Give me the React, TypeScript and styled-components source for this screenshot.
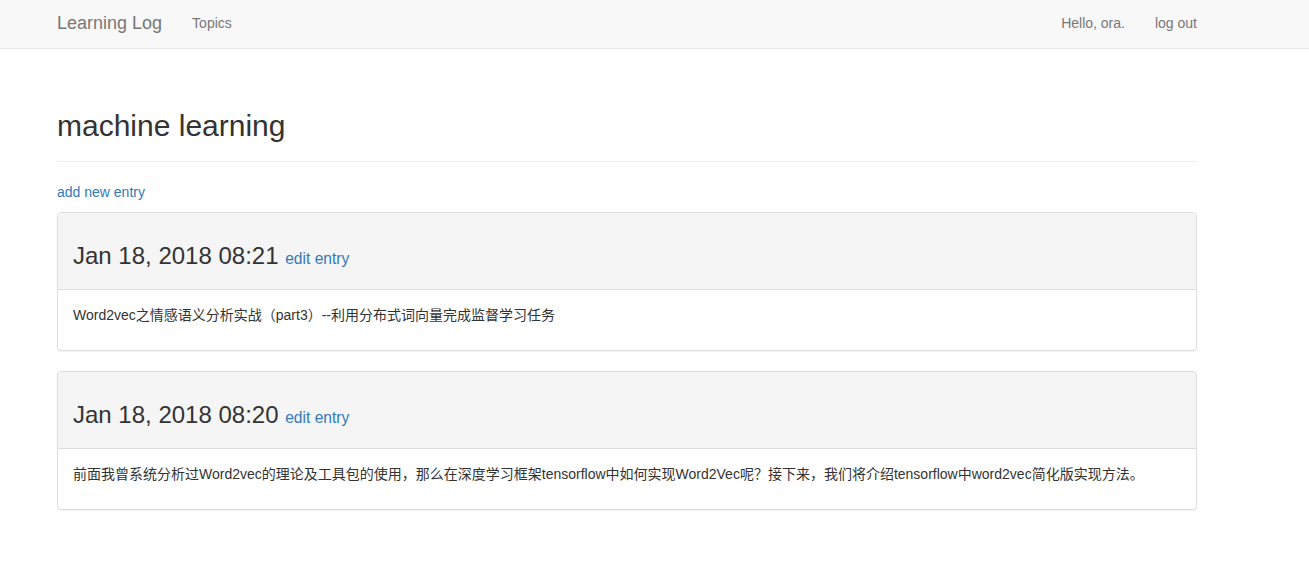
import React from "react";
import styled, { createGlobalStyle } from "styled-components";

const GlobalStyle = createGlobalStyle`
  html, body { margin: 0; padding: 0; background: #fff; }
  body {
    font-family: "Liberation Sans", Arial, "Noto Sans CJK SC", sans-serif;
    font-size: 14px;
    line-height: 1.42857143;
    color: #333;
  }
  * { box-sizing: border-box; }
`;

const Navbar = styled.nav`
  background: #f8f8f8;
  border-bottom: 1px solid #e7e7e7;
  height: 49px;
`;

const NavInner = styled.div`
  width: 1140px;
  margin-left: 57px;
  height: 46px;
  display: flex;
  align-items: center;
`;

const Brand = styled.a`
  font-size: 18px;
  line-height: 20px;
  color: #777;
  text-decoration: none;
  margin-right: 30px;
`;

const NavLink = styled.a<{ $gap?: number }>`
  font-size: 14px;
  line-height: 20px;
  color: #777;
  text-decoration: none;
  margin-left: ${(p) => p.$gap ?? 0}px;
`;

const Spacer = styled.div`
  flex: 1;
`;

const Container = styled.main`
  width: 1140px;
  margin-left: 57px;
  padding-top: 40px;
`;

const PageHeader = styled.div`
  padding-bottom: 9px;
  margin-bottom: 20px;
  border-bottom: 1px solid #eee;
`;

const Title = styled.h2`
  margin: 20px 0 10px;
  font-size: 30px;
  font-weight: 500;
  line-height: 33px;
  color: #333;
`;

const Link = styled.a`
  color: #337ab7;
  text-decoration: none;
`;

const Para = styled.p`
  margin: 0 0 10px;
  line-height: 20px;
`;

const BodyText = styled.p`
  margin: 0 0 10px;
  height: 20px;
  line-height: 20px;
`;

const Panel = styled.div`
  border: 1px solid #ddd;
  border-radius: 4px;
  background: #fff;
  margin-bottom: 20px;
  box-shadow: 0 1px 1px rgba(0, 0, 0, 0.05);
`;

const PanelHeading = styled.div`
  background: #f5f5f5;
  border-bottom: 1px solid #ddd;
  border-radius: 3px 3px 0 0;
  padding: 10px 15px;
`;

const EntryDate = styled.h3`
  margin: 20px 0 10px;
  font-size: 24px;
  font-weight: 500;
  line-height: 26px;
  color: #333;
`;

const Small = styled.small`
  font-size: 65%;
  font-weight: 400;
  line-height: 1;
`;

const PanelBody = styled.div`
  padding: 15px;
`;

const entries = [
  {
    date: "Jan 18, 2018 08:21",
    text: "Word2vec之情感语义分析实战（part3）--利用分布式词向量完成监督学习任务",
  },
  {
    date: "Jan 18, 2018 08:20",
    text: "前面我曾系统分析过Word2vec的理论及工具包的使用，那么在深度学习框架tensorflow中如何实现Word2Vec呢？接下来，我们将介绍tensorflow中word2vec简化版实现方法。",
  },
];

export default function App() {
  return (
    <>
      <GlobalStyle />
      <Navbar>
        <NavInner>
          <Brand href="#">Learning Log</Brand>
          <NavLink href="#">Topics</NavLink>
          <Spacer />
          <NavLink href="#">Hello, ora.</NavLink>
          <NavLink href="#" $gap={30}>log out</NavLink>
        </NavInner>
      </Navbar>
      <Container>
        <PageHeader>
          <Title>machine learning</Title>
        </PageHeader>
        <Para>
          <Link href="#">add new entry</Link>
        </Para>
        {entries.map((e) => (
          <Panel key={e.date}>
            <PanelHeading>
              <EntryDate>
                {e.date} <Small><Link href="#">edit entry</Link></Small>
              </EntryDate>
            </PanelHeading>
            <PanelBody>
              <BodyText>{e.text}</BodyText>
            </PanelBody>
          </Panel>
        ))}
      </Container>
    </>
  );
}
